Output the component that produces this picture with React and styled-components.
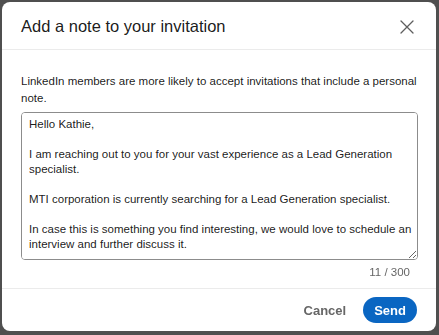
import styled, { createGlobalStyle } from "styled-components";

const GlobalStyle = createGlobalStyle`
  html, body {
    margin: 0;
    background: #4f4f4f;
  }
  body {
    font-family: "Liberation Sans", Arial, sans-serif;
    -webkit-font-smoothing: antialiased;
  }
`;

const Page = styled.div`
  width: 439px;
  height: 335px;
  box-sizing: border-box;
  padding: 2px 3px 4px 2px;
`;

const Modal = styled.div`
  height: 100%;
  background: #fff;
  border-radius: 8px;
  display: flex;
  flex-direction: column;
  overflow: hidden;
`;

const Header = styled.div`
  height: 48px;
  box-sizing: border-box;
  display: flex;
  align-items: center;
  justify-content: space-between;
  padding: 2px 18px 0 19px;
  border-bottom: 1px solid #ebebeb;
`;

const Title = styled.h2`
  margin: 0;
  font-size: 16.5px;
  font-weight: 400;
  color: rgba(0, 0, 0, 0.9);
`;

const CloseButton = styled.button`
  border: 0;
  background: none;
  padding: 0;
  width: 22px;
  height: 22px;
  display: flex;
  align-items: center;
  justify-content: center;
  color: #5e5e5e;
`;

const Body = styled.div`
  padding: 23px 18px 0 19px;
  display: flex;
  flex-direction: column;
`;

const Hint = styled.p`
  margin: 0 0 5px;
  font-size: 11.5px;
  line-height: 17px;
  color: rgba(0, 0, 0, 0.9);
`;

const Note = styled.textarea`
  height: 148px;
  box-sizing: border-box;
  border: 1px solid #8c8c8c;
  border-radius: 4px;
  padding: 4px 0 20px 7px;
  font-family: "Liberation Sans", Arial, sans-serif;
  font-size: 11.5px;
  line-height: 15px;
  color: rgba(0, 0, 0, 0.9);
  overflow-y: scroll;
  outline: none;

  &::-webkit-scrollbar {
    width: 6px;
  }
  &::-webkit-scrollbar-thumb {
    background: #8a8a8a;
    border-radius: 3px;
  }
  &::-webkit-scrollbar-track {
    background: #fff;
  }
`;

const Counter = styled.div`
  align-self: flex-end;
  margin: 4px 8px 0 0;
  font-size: 11.5px;
  line-height: 16px;
  color: #666;
`;

const Footer = styled.div`
  margin-top: auto;
  height: 43px;
  box-sizing: border-box;
  border-top: 1px solid #ebebeb;
  display: flex;
  align-items: center;
  justify-content: flex-end;
  gap: 17px;
  padding: 0 19px 0 0;
`;

const Button = styled.button`
  border: 0;
  font-family: "Liberation Sans", Arial, sans-serif;
  font-size: 13px;
  font-weight: 700;
  height: 26px;
  padding: 0 ${(p) => (p.primary ? "11px" : "0")};
  border-radius: 13px;
  background: ${(p) => (p.primary ? "#0a66c2" : "transparent")};
  color: ${(p) => (p.primary ? "#fff" : "#666")};
`;

const message = `Hello Kathie,

I am reaching out to you for your vast experience as a Lead Generation specialist.

MTI corporation is currently searching for a Lead Generation specialist.

In case this is something you find interesting, we would love to schedule an interview and further discuss it.`;

export default function App() {
  return (
    <Page>
      <GlobalStyle />
      <Modal>
        <Header>
          <Title>Add a note to your invitation</Title>
          <CloseButton aria-label="Dismiss">
            <svg width="16" height="16" viewBox="0 0 16 16" fill="none">
              <path d="M2 2 L14 14 M14 2 L2 14" stroke="currentColor" strokeWidth="1.3" strokeLinecap="round" />
            </svg>
          </CloseButton>
        </Header>
        <Body>
          <Hint>
            LinkedIn members are more likely to accept invitations that include a personal note.
          </Hint>
          <Note defaultValue={message} />
          <Counter>11 / 300</Counter>
        </Body>
        <Footer>
          <Button>Cancel</Button>
          <Button primary>Send</Button>
        </Footer>
      </Modal>
    </Page>
  );
}
